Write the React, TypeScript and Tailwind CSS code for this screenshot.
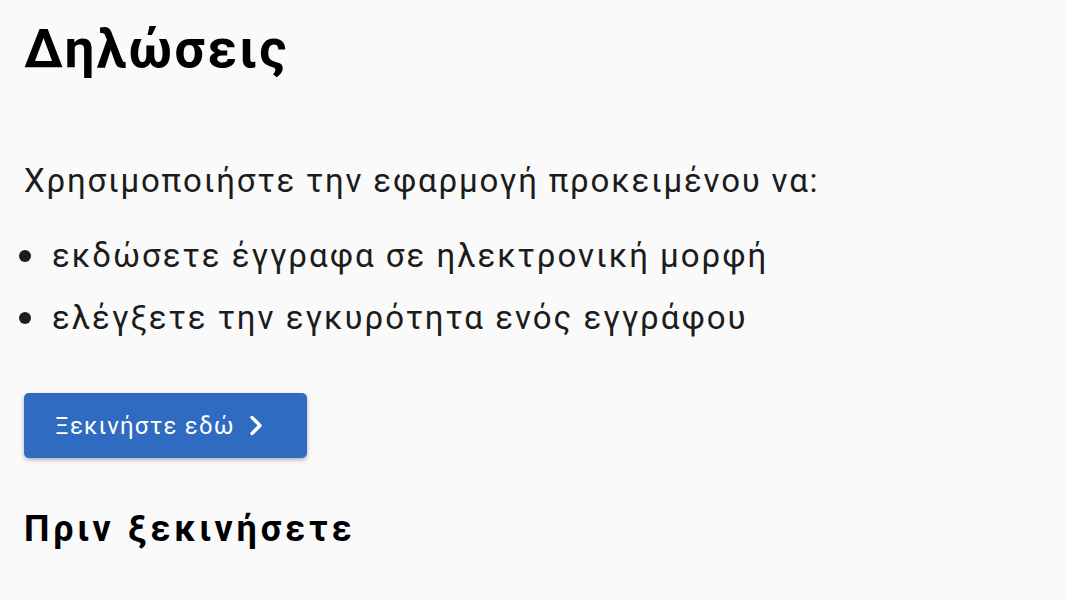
import React from "react";

export default function App() {
  return (
    <div className="min-h-[600px] w-[1066px] bg-[#fafafa] text-[#1c1c1c] font-['Roboto',sans-serif] px-[24px] pt-[19px]">
      <h1 className="text-[53px] font-bold leading-[60px] tracking-[2.5px] text-black">Δηλώσεις</h1>
      <p className="mt-[82px] text-[33px] leading-[40px] tracking-[1.8px]">Χρησιμοποιήστε την εφαρμογή προκειμένου να:</p>
      <ul className="mt-[35px] flex flex-col gap-[22px] text-[33px] leading-[40px] tracking-[2px]">
        <li className="flex items-start -ml-[5px]">
          <span className="mt-[14px] mr-[21px] w-[12px] h-[12px] rounded-full bg-[#1c1c1c] shrink-0" />
          εκδώσετε έγγραφα σε ηλεκτρονική μορφή
        </li>
        <li className="flex items-start -ml-[5px]">
          <span className="mt-[14px] mr-[21px] w-[12px] h-[12px] rounded-full bg-[#1c1c1c] shrink-0" />
          ελέγξετε την εγκυρότητα ενός εγγράφου
        </li>
      </ul>
      <button className="mt-[55px] flex items-center h-[65px] w-[283px] rounded-[5px] bg-[#2f6bc1] pl-[31px] text-white text-[24px] tracking-[1.2px] shadow-[0_2px_4px_rgba(0,0,0,0.3)]">
        Ξεκινήστε εδώ
        <svg className="ml-[14px]" width="15" height="21" viewBox="0 0 15 21" fill="none">
          <path d="M3 2.5l8 8-8 8" stroke="white" strokeWidth="3.4" strokeLinecap="round" strokeLinejoin="round" />
        </svg>
      </button>
      <h2 className="mt-[49px] text-[36px] font-bold tracking-[3.8px] leading-[44px] text-black">Πριν ξεκινήσετε</h2>
    </div>
  );
}
